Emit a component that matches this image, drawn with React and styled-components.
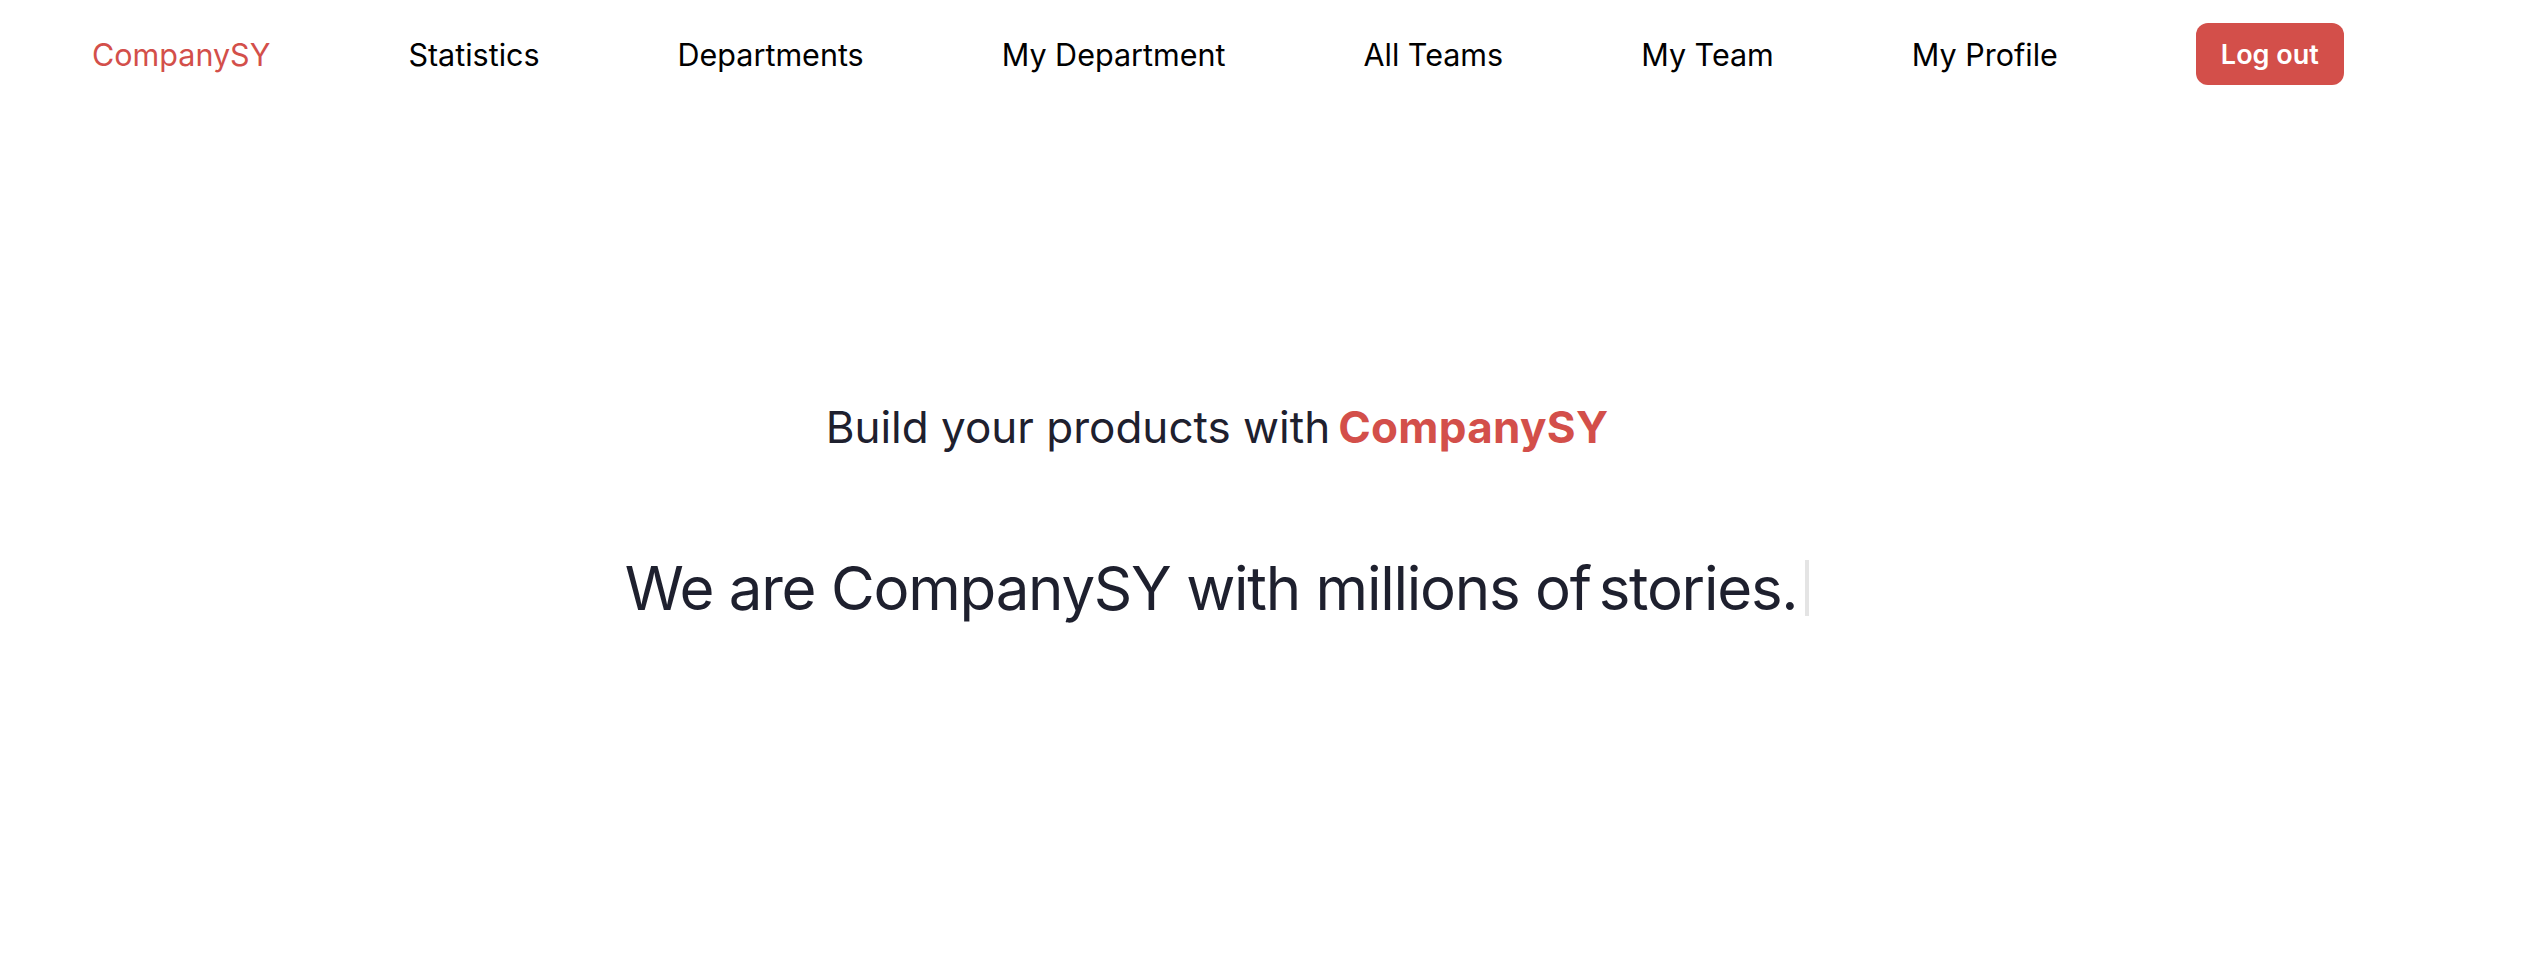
import React from "react";
import styled, { createGlobalStyle } from "styled-components";

const GlobalStyle = createGlobalStyle`
  html, body {
    margin: 0;
    padding: 0;
    background: #ffffff;
    font-family: Inter, "Noto Sans", sans-serif;
  }
`;

const links = ["Statistics", "Departments", "My Department", "All Teams", "My Team", "My Profile"];

const App = () => {
  return (
    <Page>
      <GlobalStyle />
      <Nav>
        <Brand href="#">CompanySY</Brand>
        {links.map((l) => (
          <NavLink key={l} href="#">{l}</NavLink>
        ))}
        <LogoutButton>Log out</LogoutButton>
      </Nav>
      <Hero>
        <Tagline>
          Build your products with<Accent>CompanySY</Accent>
        </Tagline>
        <Typed>
          We are CompanySY with millions of<Word>stories.</Word>
          <Cursor />
        </Typed>
      </Hero>
    </Page>
  );
};

const Page = styled.div`
  width: 100%;
  min-height: 980px;
`;

const Nav = styled.nav`
  display: flex;
  align-items: center;
  gap: 138px;
  height: 108px;
  padding-left: 92px;
  box-sizing: border-box;
`;

const Brand = styled.a`
  color: #d34f4a;
  font-size: 30.5px;
  text-decoration: none;
`;

const NavLink = styled.a`
  color: #000000;
  font-size: 30.5px;
  text-decoration: none;
`;

const LogoutButton = styled.button`
  background: #d34f4a;
  color: #ffffff;
  border: none;
  border-radius: 12px;
  font-family: inherit;
  font-size: 27px;
  font-weight: 600;
  height: 62px;
  padding: 0 25px;
  cursor: pointer;
`;

const Hero = styled.section`
  display: flex;
  flex-direction: column;
  align-items: center;
  padding-top: 292px;
  padding-right: 92px;
`;

const Tagline = styled.h2`
  margin: 0;
  font-size: 44px;
  font-weight: 400;
  color: #1e202e;
`;

const Accent = styled.span`
  color: #d34f4a;
  font-weight: 700;
  letter-spacing: 0.3px;
  margin-left: 8px;
`;

const Typed = styled.h1`
  display: flex;
  align-items: center;
  margin: 98px 0 0;
  font-size: 60px;
  font-weight: 400;
  color: #1e202e;
  letter-spacing: -1.25px;
  white-space: pre;
`;

const Word = styled.span`
  margin-left: 8px;
`;

const Cursor = styled.span`
  display: inline-block;
  width: 4px;
  height: 56px;
  margin-left: 8px;
  background: #e4e4e4;
`;

export default App;
